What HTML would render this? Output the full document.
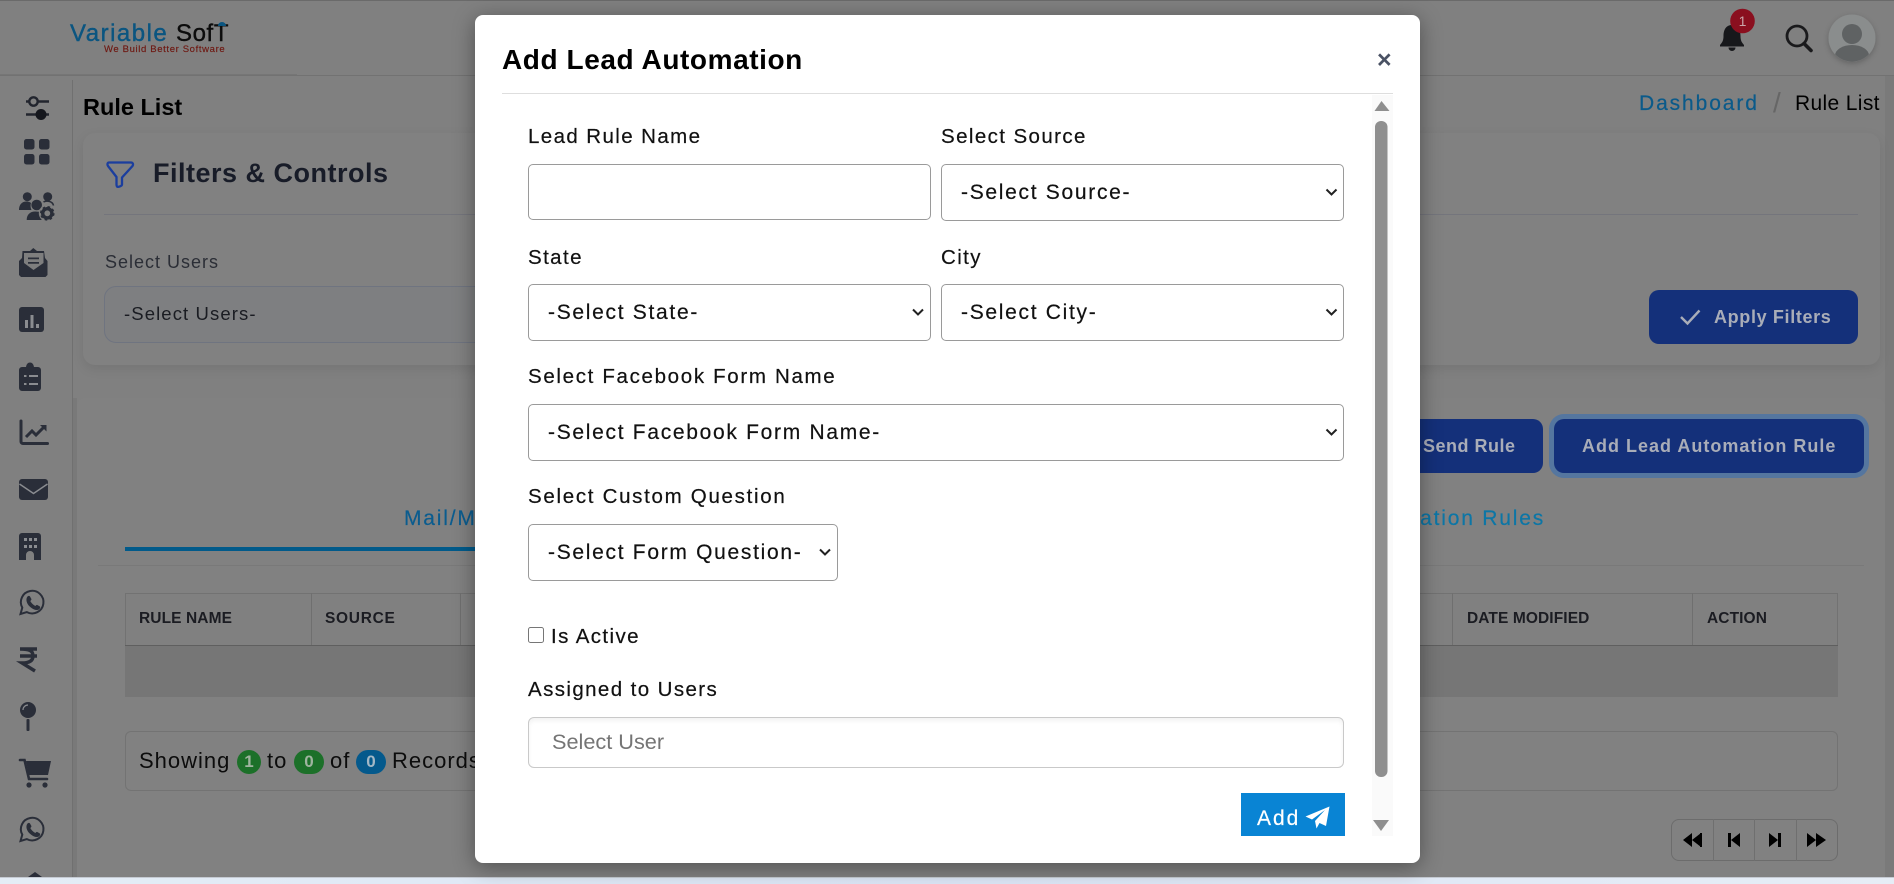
<!DOCTYPE html>
<html lang="en">
<head>
<meta charset="utf-8">
<title>Rule List</title>
<style>
html,body{margin:0;padding:0;width:1894px;height:884px;overflow:hidden;background:#808080;font-family:"Liberation Sans",Arial,sans-serif;}
.a{position:absolute;}
.t{position:absolute;white-space:nowrap;line-height:30px;height:30px;}
.lb{font-size:20.5px;letter-spacing:1.4px;color:#111;-webkit-text-stroke:.2px #111;}
.bt{font-size:18px;font-weight:700;color:#a9adb8;}
.th{font-size:15.5px;font-weight:700;color:#1b1c22;letter-spacing:.1px;}
select,input[type=text]{position:absolute;box-sizing:border-box;margin:0;font-family:"Liberation Sans",Arial,sans-serif;}
select{appearance:none;-webkit-appearance:none;font-size:21px;letter-spacing:1.7px;color:#111;-webkit-text-stroke:.2px #111;background:#fff;border:1px solid #9a9a9a;border-radius:5px;padding:0 0 0 19px;outline:none;}
.v{position:absolute;width:1px;background:#6f6f6f;}
.bd{position:absolute;height:24px;border-radius:12px;color:#9fb49f;font-size:17px;font-weight:700;text-align:center;line-height:24px;}
</style>
</head>
<body>
<!-- page chrome -->
<div class="a" style="left:0;top:0;width:1894px;height:1px;background:#6a6a6a"></div>
<div class="a" style="left:0;top:75px;width:1894px;height:1px;background:#727272"></div>
<div class="a" style="left:0;top:74px;width:297px;height:1px;background:#767676"></div>
<div class="a" style="left:72px;top:80px;width:1px;height:797px;background:#707070"></div>
<div class="a" style="left:73px;top:398px;width:4px;height:479px;background:#797979"></div>
<div class="a" style="left:1885px;top:76px;width:9px;height:801px;background:#7a7a7a"></div>

<!-- logo -->
<div class="t" style="left:70px;top:19px;font-size:24px;letter-spacing:1.5px;color:#0b5580;-webkit-text-stroke:.4px #0b5580">Variable</div>
<div class="t" style="left:176px;top:19px;font-size:24px;letter-spacing:.6px;color:#0c0c0c;-webkit-text-stroke:.4px #0c0c0c">SofT</div>
<div class="a" style="left:218px;top:22px;width:8px;height:4px;border-radius:4px 4px 0 0;background:#0b5580"></div>
<div class="t" style="left:104px;top:35px;font-size:9.5px;letter-spacing:.64px;color:#6e1710;-webkit-text-stroke:.15px #6e1710">We Build Better Software</div>

<div class="t" style="left:83px;top:92px;font-size:23.5px;font-weight:700;color:#000">Rule List</div>
<div class="t" style="left:1639px;top:89px;font-size:21px;letter-spacing:1.9px;color:#0a5a8a;-webkit-text-stroke:.2px #0a5a8a">Dashboard</div>
<div class="t" style="left:1773px;top:88px;font-size:28px;color:#666">/</div>
<div class="t" style="left:1795px;top:89px;font-size:21px;letter-spacing:.35px;color:#000">Rule List</div>

<!-- filter card -->
<div class="a" style="left:83px;top:133px;width:1797px;height:232px;background:#818181;border-radius:12px;box-shadow:0 4px 12px rgba(0,0,0,.09)"></div>
<div class="t" style="left:153px;top:158px;font-size:27px;font-weight:700;letter-spacing:.5px;color:#181c28">Filters &amp; Controls</div>
<div class="a" style="left:104px;top:214px;width:1754px;height:1px;background:#74757c"></div>
<div class="t" style="left:105px;top:247px;font-size:18px;letter-spacing:1px;color:#2b2e36">Select Users</div>
<div class="a" style="left:104px;top:286px;width:600px;height:57px;box-sizing:border-box;border:1px solid #6f7480;border-radius:12px;background:#7e7f81"></div>
<div class="t" style="left:124px;top:299px;font-size:18.5px;letter-spacing:1.1px;color:#1a1c22">-Select Users-</div>
<div class="a" style="left:1649px;top:290px;width:209px;height:54px;background:#14307a;border-radius:10px"></div>
<div class="t bt" style="left:1714px;top:302px;letter-spacing:.65px">Apply Filters</div>

<!-- main card -->
<div class="a" style="left:77px;top:398px;width:1808px;height:479px;background:#818181;border-radius:8px 8px 0 0"></div>
<div class="a" style="left:1300px;top:419px;width:243px;height:54px;background:#14307a;border-radius:10px"></div>
<div class="t bt" style="left:1423px;top:431px;letter-spacing:.5px">Send Rule</div>
<div class="a" style="left:1554px;top:419px;width:310px;height:54px;box-sizing:content-box;background:#14307a;border-radius:10px;box-shadow:0 0 0 5px #55769f"></div>
<div class="t bt" style="left:1582px;top:431px;letter-spacing:1px">Add Lead Automation Rule</div>

<div class="t" style="left:404px;top:504px;font-size:21px;letter-spacing:1.8px;color:#0a5c8f;-webkit-text-stroke:.2px #0a5c8f">Mail/Message Rules</div>
<div class="t" style="right:349px;top:504px;font-size:21px;letter-spacing:1.8px;color:#0c76a6;-webkit-text-stroke:.2px #0c76a6">Lead Automation Rules</div>
<div class="a" style="left:125px;top:547px;width:400px;height:4px;background:#015a8a"></div>
<div class="a" style="left:98px;top:565px;width:1766px;height:1px;background:#797979"></div>

<!-- table -->
<div class="a" style="left:125px;top:593px;width:1713px;height:52px;box-sizing:border-box;border:1px solid #727272;border-bottom:0;background:#808080"></div>
<div class="a" style="left:125px;top:645px;width:1713px;height:1px;background:#5f5f5f"></div>
<div class="a" style="left:125px;top:646px;width:1713px;height:51px;background:#767676"></div>
<div class="v" style="left:311px;top:593px;height:52px"></div>
<div class="v" style="left:460px;top:593px;height:52px"></div>
<div class="v" style="left:1452px;top:593px;height:52px"></div>
<div class="v" style="left:1692px;top:593px;height:52px"></div>
<div class="t th" style="left:139px;top:604px">RULE NAME</div>
<div class="t th" style="left:325px;top:604px;letter-spacing:.7px">SOURCE</div>
<div class="t th" style="left:1467px;top:604px">DATE MODIFIED</div>
<div class="t th" style="left:1707px;top:604px">ACTION</div>

<!-- records -->
<div class="a" style="left:125px;top:731px;width:1713px;height:60px;box-sizing:border-box;border:1px solid #737373;border-radius:6px"></div>
<div class="t" style="left:139px;top:746px;font-size:22px;letter-spacing:1px;color:#0c0c0c">Showing</div>
<div class="bd" style="left:237px;top:750px;width:24px;background:#1c7029">1</div>
<div class="t" style="left:267px;top:746px;font-size:22px;letter-spacing:1px;color:#0c0c0c">to</div>
<div class="bd" style="left:294px;top:750px;width:30px;background:#1c7029">0</div>
<div class="t" style="left:330px;top:746px;font-size:22px;letter-spacing:1px;color:#0c0c0c">of</div>
<div class="bd" style="left:356px;top:750px;width:30px;background:#04598c;color:#a3b8c6">0</div>
<div class="t" style="left:392px;top:746px;font-size:22px;letter-spacing:1px;color:#0c0c0c">Records</div>

<!-- pagination -->
<div class="a" style="left:1671px;top:819px;width:167px;height:42px;box-sizing:border-box;border:1px solid #6c6c6c;border-radius:8px"></div>
<div class="v" style="left:1713px;top:819px;height:42px"></div>
<div class="v" style="left:1754px;top:819px;height:42px"></div>
<div class="v" style="left:1796px;top:819px;height:42px"></div>

<!-- icons -->
<svg class="a" style="left:0;top:0" width="1894" height="884" viewBox="0 0 1894 884" fill="#2a2e39">
  <!-- sliders -->
  <g stroke="#22252e" stroke-width="2.4" fill="none"><path d="M26 101.500H29M38.500 101.500H49"/><circle cx="33.500" cy="101.500" r="4.200"/><path d="M26 114.500H49"/></g>
  <circle cx="41" cy="114.500" r="5.500" fill="#15171d"/>
  <!-- grid -->
  <rect x="24" y="139" width="10.500" height="10.500" rx="2.500"/><rect x="39" y="139" width="10.500" height="10.500" rx="2.500"/>
  <rect x="24" y="154" width="10.500" height="10.500" rx="2.500"/><rect x="39" y="154" width="10.500" height="10.500" rx="2.500"/>
  <!-- users cog -->
  <circle cx="27.300" cy="196.700" r="4.500"/><circle cx="47.700" cy="196.700" r="4.500"/><circle cx="36.700" cy="205" r="5.300"/>
  <path d="M19 210c0-5.500 3-8.500 7.500-8.500 2 0 3.500.6 4.500 1.500-.8 2.200-.5 5 .5 7zM26.700 220c0-5.500 3.500-8.500 8.500-8.500 2.500 0 4.800.4 6.500 1.300V220z"/>
  <path d="M43.500 202c3-1.800 9-1 10 3.500" fill="none" stroke="#2a2e39" stroke-width="1.600"/>
  <circle cx="47.300" cy="213.300" r="8.500" fill="#808080"/>
  <circle cx="47.300" cy="213.300" r="4.600" fill="none" stroke="#2a2e39" stroke-width="3.400"/>
  <circle cx="47.300" cy="213.300" r="6.200" fill="none" stroke="#2a2e39" stroke-width="2.200" stroke-dasharray="2.500 2.370"/>
  <!-- mail open -->
  <path d="M33.300 248l3.700 3h7l1 7 2.500 3v14l-2 2H21l-2-2V261l3-3 .5-7H30z"/>
  <path d="M24 253h19.500v10l-10 7-9.500-7z" fill="#7e7e7e"/>
  <path d="M28 257.500h11v1.800H28zM28 262h11v1.800H28z"/>
  <!-- bar chart -->
  <rect x="19" y="307" width="25" height="25" rx="3"/>
  <path d="M25 320h3v8h-3zM30.500 315h3v13h-3zM36 324h3v4h-3z" fill="#8a8c90"/>
  <!-- clipboard -->
  <path d="M22 367h4c.5-3 2-4.500 4-4.500s3.500 1.500 4 4.500h4a3 3 0 0 1 3 3v18a3 3 0 0 1-3 3H22a3 3 0 0 1-3-3v-18a3 3 0 0 1 3-3z"/>
  <path d="M29 375h9v2h-9zM29 383h9v2h-9zM24 375h2.500v2H24zM24 383h2.500v2H24z" fill="#8a8c90"/>
  <!-- line chart -->
  <path d="M21 421v20.500a2 2 0 0 0 2 2h24.500" fill="none" stroke="#2a2e39" stroke-width="3" stroke-linecap="round"/>
  <path d="M26 437l6-6 4 4 9-9" fill="none" stroke="#2a2e39" stroke-width="3"/>
  <path d="M40 425h6.500v6.500z"/>
  <!-- envelope -->
  <rect x="19" y="479" width="29" height="21" rx="3"/>
  <path d="M19.500 484l14 9.500 14-9.500" fill="none" stroke="#8a8c90" stroke-width="1.500"/>
  <!-- building -->
  <path d="M22 533h16a3 3 0 0 1 3 3v24h-7v-5a3 3 0 0 0-8 0v5h-7v-24a3 3 0 0 1 3-3z"/>
  <path d="M24 538h3v3h-3zM29 538h3v3h-3zM34 538h3v3h-3zM24 545h3v3h-3zM29 545h3v3h-3zM34 545h3v3h-3z" fill="#8a8c90"/>
  <!-- whatsapp x2 -->
  <path d="M20.500 614l1.800-6.400a11.300 11.300 0 1 1 4.600 4.500z" fill="none" stroke="#2a2e39" stroke-width="2"/><path d="M27.500 596.500c1-.8 2-.7 2.500 0l1.400 2.500c.2.600-.2 1.200-1 2-.2.500 2.700 4 5 5 .8-.8 1.300-1.300 1.900-1l2.600 1.500c.6.600.3 2-1 3-2 1.300-5.500.3-8.800-2.600-3.800-3.400-4.600-7.800-2.600-10.400z"/>
  <path d="M20.500 841l1.800-6.400a11.300 11.300 0 1 1 4.600 4.500z" fill="none" stroke="#2a2e39" stroke-width="2"/><path d="M27.500 823.500c1-.8 2-.7 2.500 0l1.400 2.500c.2.600-.2 1.200-1 2-.2.500 2.700 4 5 5 .8-.8 1.300-1.300 1.900-1l2.600 1.500c.6.600.3 2-1 3-2 1.300-5.500.3-8.800-2.600-3.800-3.400-4.600-7.800-2.600-10.400z"/>
  <!-- rupee -->
  <path d="M20 649h17M20 656h17M20 649c10 0 13 2 13 7s-4 7-11 7l13 8" fill="none" stroke="#2a2e39" stroke-width="3.400"/>
  <!-- pin -->
  <circle cx="28" cy="710" r="8"/><rect x="26.500" y="719" width="3" height="12" rx="1"/>
  <path d="M23 710a5 5 0 0 1 5-5" fill="none" stroke="#8a8c90" stroke-width="1.200"/>
  <!-- cart -->
  <path d="M20 760h4.500l4.500 19h18" fill="none" stroke="#2a2e39" stroke-width="2.600" stroke-linecap="round"/>
  <path d="M26 761h25l-3 14H29z"/>
  <circle cx="29" cy="785" r="2.600"/><circle cx="45" cy="785" r="2.600"/>
  <!-- bottom -->
  <path d="M35 872l7 5H28z"/>
  <!-- filter -->
  <path d="M109 162.500h22c2 0 2.500 2 1.500 3.500L122 177.500v7c0 1.500-4 3-5 2-.5-.5-.5-1-.5-2v-7.500L108 166c-1-1.500-.5-3.500 1-3.500z" fill="none" stroke="#1b3e9e" stroke-width="2.300" stroke-linejoin="round"/>
  <!-- check -->
  <path d="M1681 317l6.500 6.500 12-13" fill="none" stroke="#a9adb8" stroke-width="2.400"/>
  <!-- bell -->
  <path d="M1732 25c6 0 8.500 5 8.500 11 0 5 1.500 6.500 3.500 9v1.500h-24V45c2-2.500 3.500-4 3.500-9 0-6 2.500-11 8.500-11z" fill="#17181b"/>
  <path d="M1728.500 47.500h7a3.500 3.500 0 0 1-7 0z" fill="#17181b"/>
  <circle cx="1742.500" cy="21" r="12.300" fill="#8a0f1f"/>
  <!-- search -->
  <circle cx="1797" cy="36" r="10" fill="none" stroke="#1a1a1c" stroke-width="2.800"/>
  <path d="M1804 43.500l7 7" stroke="#1a1a1c" stroke-width="3.600" stroke-linecap="round"/>
  <!-- avatar -->
  <defs><clipPath id="av"><circle cx="1852" cy="38" r="23.500"/></clipPath><filter id="sh" x="-30%" y="-30%" width="160%" height="160%"><feDropShadow dx="0" dy="2" stdDeviation="3" flood-color="#000" flood-opacity=".22"/></filter></defs>
  <circle cx="1852" cy="38" r="23.500" fill="#8a8d8d" filter="url(#sh)"/>
  <g clip-path="url(#av)" fill="#5f6263"><circle cx="1852" cy="34" r="10"/><ellipse cx="1852" cy="55.500" rx="17" ry="10.500"/></g>
  <!-- pagination -->
  <g fill="#000">
    <path d="M1683 840l9-7v14zM1692 840l9-7v14z"/><rect x="1700" y="833" width="2" height="14"/>
    <rect x="1728" y="833" width="3" height="14"/><path d="M1731 840l9-7v14z"/>
    <path d="M1769 833l9 7-9 7z"/><rect x="1778" y="833" width="3" height="14"/>
    <path d="M1807 833l9 7-9 7zM1816 833l10 7-10 7z"/>
  </g>
</svg>
<div class="t" style="left:1737px;top:6px;width:11px;text-align:center;font-size:14px;color:#c9a5a9">1</div>

<!-- bottom strip -->
<div class="a" style="left:0;top:877px;width:1894px;height:7px;background:linear-gradient(90deg,#e4edf6,#dbe5f5 50%,#e6edf6);border-top:1px solid #c5cad2;box-sizing:border-box"></div>

<!-- modal -->
<div class="a" style="left:475px;top:15px;width:945px;height:848px;background:#fff;border-radius:8px;box-shadow:0 4px 22px rgba(0,0,0,.38)"></div>
<div class="t" style="left:502px;top:45px;font-size:28px;font-weight:700;letter-spacing:.58px;color:#000">Add Lead Automation</div>
<div class="t" style="left:1377px;top:45px;font-size:25px;font-weight:700;color:#4a5264">×</div>
<div class="a" style="left:502px;top:93px;width:891px;height:1px;background:#dedede"></div>

<div class="a" style="left:1372px;top:95px;width:21px;height:741px;background:#fafafa"></div>
<svg class="a" style="left:1372px;top:95px" width="21" height="741" viewBox="0 0 21 741">
  <path d="M9.500 6l8 10h-15z" fill="#8f8f8f"/>
  <rect x="3" y="26" width="12.500" height="656" rx="6" fill="#8f8f8f"/>
  <path d="M1 725h16l-8 11z" fill="#8f8f8f"/>
</svg>

<div class="t lb" style="left:528px;top:122px">Lead Rule Name</div>
<div class="t lb" style="left:941px;top:122px">Select Source</div>
<input type="text" aria-label="Lead Rule Name" style="left:528px;top:164px;width:403px;height:56px;border:1px solid #9a9a9a;border-radius:5px;background:#fff">
<select style="left:941px;top:164px;width:403px;height:57px"><option>-Select Source-</option></select>

<div class="t lb" style="left:528px;top:243px">State</div>
<div class="t lb" style="left:941px;top:243px">City</div>
<select style="left:528px;top:284px;width:403px;height:57px"><option>-Select State-</option></select>
<select style="left:941px;top:284px;width:403px;height:57px"><option>-Select City-</option></select>

<div class="t lb" style="left:528px;top:362px;letter-spacing:1.67px">Select Facebook Form Name</div>
<select style="left:528px;top:404px;width:816px;height:57px"><option>-Select Facebook Form Name-</option></select>

<div class="t lb" style="left:528px;top:482px;letter-spacing:1.7px">Select Custom Question</div>
<select style="left:528px;top:524px;width:310px;height:57px"><option>-Select Form Question-</option></select>

<svg class="a" style="left:0;top:0;pointer-events:none" width="1894" height="884" viewBox="0 0 1894 884" fill="none" stroke="#222" stroke-width="2">
  <path d="M1326.500 189.500l5 5 5-5"/>
  <path d="M913 309.500l5 5 5-5"/>
  <path d="M1326.500 309.500l5 5 5-5"/>
  <path d="M1326.500 429.500l5 5 5-5"/>
  <path d="M820 549.500l5 5 5-5"/>
</svg>

<input type="checkbox" aria-label="Is Active" class="a" style="left:528px;top:627px;width:16px;height:16px;margin:0">
<div class="t lb" style="left:551px;top:622px;letter-spacing:1.4px">Is Active</div>

<div class="t lb" style="left:528px;top:675px">Assigned to Users</div>
<input type="text" placeholder="Select User" style="left:528px;top:717px;width:816px;height:51px;border:1px solid #c9c9c9;border-radius:6px;background:#fff;padding:0 0 2px 23px;font-size:21.700px;box-shadow:inset 0 3px 4px rgba(0,0,0,.05)">

<div class="a" style="left:1241px;top:793px;width:104px;height:43px;background:#0984d4"></div>
<div class="t" style="left:1257px;top:804px;font-size:21px;letter-spacing:2px;color:#fff;-webkit-text-stroke:.2px #fff">Add</div>
<svg class="a" style="left:1305px;top:806px" width="25" height="23" viewBox="0 0 25 23"><path d="M24.500 .5L21 20l-6.500-3-3 5.500-1.500-7.500L20 4 7 13.500.5 10.500z" fill="#fff"/></svg>
</body>
</html>
